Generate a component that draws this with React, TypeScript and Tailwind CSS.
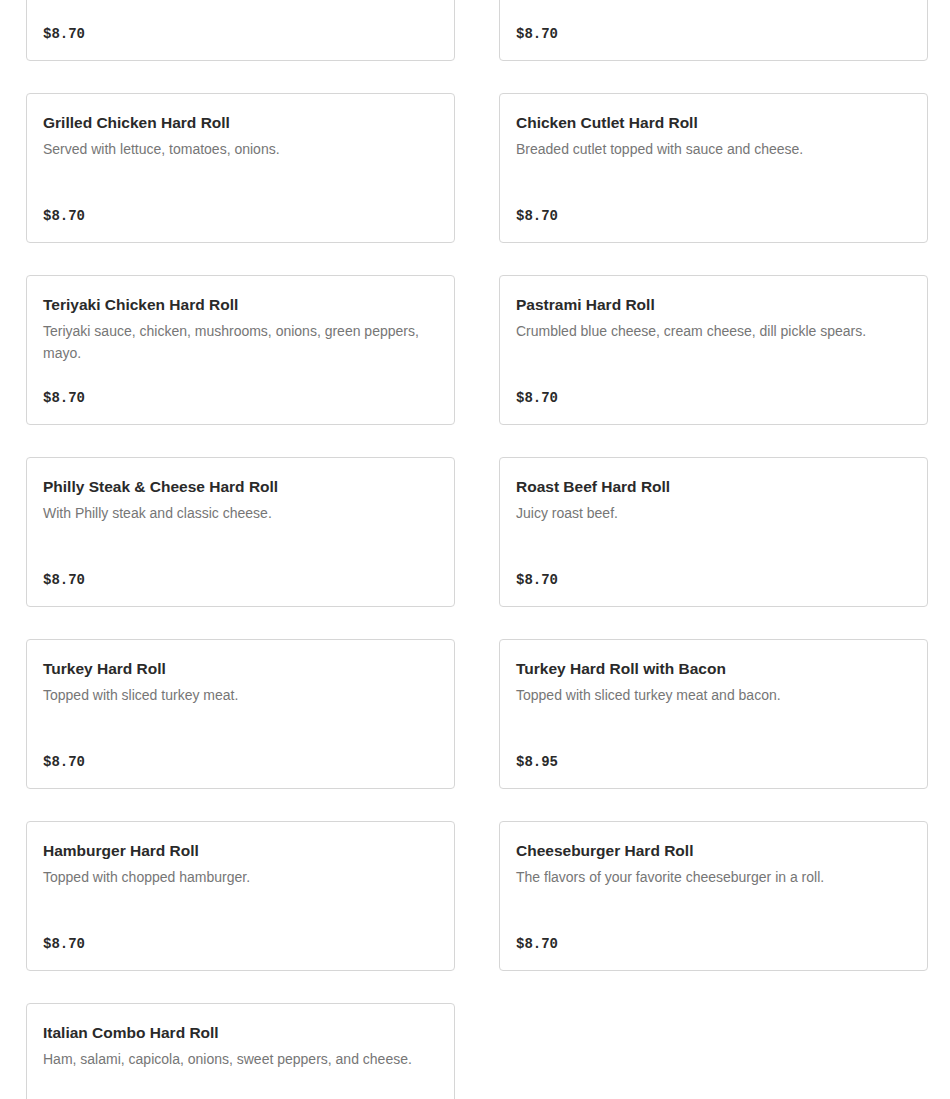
interface MenuItem {
  name: string;
  description: string;
  price: string;
}

const items: MenuItem[] = [
  { name: "Ham Hard Roll", description: "Topped with sliced ham.", price: "$8.70" },
  { name: "Tuna Hard Roll", description: "Homemade tuna salad.", price: "$8.70" },
  { name: "Grilled Chicken Hard Roll", description: "Served with lettuce, tomatoes, onions.", price: "$8.70" },
  { name: "Chicken Cutlet Hard Roll", description: "Breaded cutlet topped with sauce and cheese.", price: "$8.70" },
  {
    name: "Teriyaki Chicken Hard Roll",
    description: "Teriyaki sauce, chicken, mushrooms, onions, green peppers, mayo.",
    price: "$8.70",
  },
  { name: "Pastrami Hard Roll", description: "Crumbled blue cheese, cream cheese, dill pickle spears.", price: "$8.70" },
  { name: "Philly Steak & Cheese Hard Roll", description: "With Philly steak and classic cheese.", price: "$8.70" },
  { name: "Roast Beef Hard Roll", description: "Juicy roast beef.", price: "$8.70" },
  { name: "Turkey Hard Roll", description: "Topped with sliced turkey meat.", price: "$8.70" },
  { name: "Turkey Hard Roll with Bacon", description: "Topped with sliced turkey meat and bacon.", price: "$8.95" },
  { name: "Hamburger Hard Roll", description: "Topped with chopped hamburger.", price: "$8.70" },
  { name: "Cheeseburger Hard Roll", description: "The flavors of your favorite cheeseburger in a roll.", price: "$8.70" },
  { name: "Italian Combo Hard Roll", description: "Ham, salami, capicola, onions, sweet peppers, and cheese.", price: "$8.70" },
];

function ItemCard({ item }: { item: MenuItem }) {
  return (
    <div className="h-[150px] border border-[#d6d6d6] rounded-[4px] bg-white px-4 pt-[17px] pb-4 flex flex-col">
      <h3 className="text-[15.5px] leading-6 font-semibold text-[#2a2a2a]">{item.name}</h3>
      <p className="mt-[3px] text-[14px] leading-[22px] text-[#767676] min-h-[44px]">{item.description}</p>
      <p className="mt-auto text-[14px] leading-5 font-bold text-[#2a2a2a] font-['Liberation_Mono',monospace]">
        {item.price}
      </p>
    </div>
  );
}

export default function App() {
  return (
    <div className="min-h-screen bg-white overflow-hidden font-['Liberation_Sans',Arial,sans-serif]">
      <div className="-mt-[89px] pl-[26px] pr-[22px] grid grid-cols-2 gap-x-[44px] gap-y-[32px]">
        {items.map((item) => (
          <ItemCard key={item.name} item={item} />
        ))}
      </div>
    </div>
  );
}
